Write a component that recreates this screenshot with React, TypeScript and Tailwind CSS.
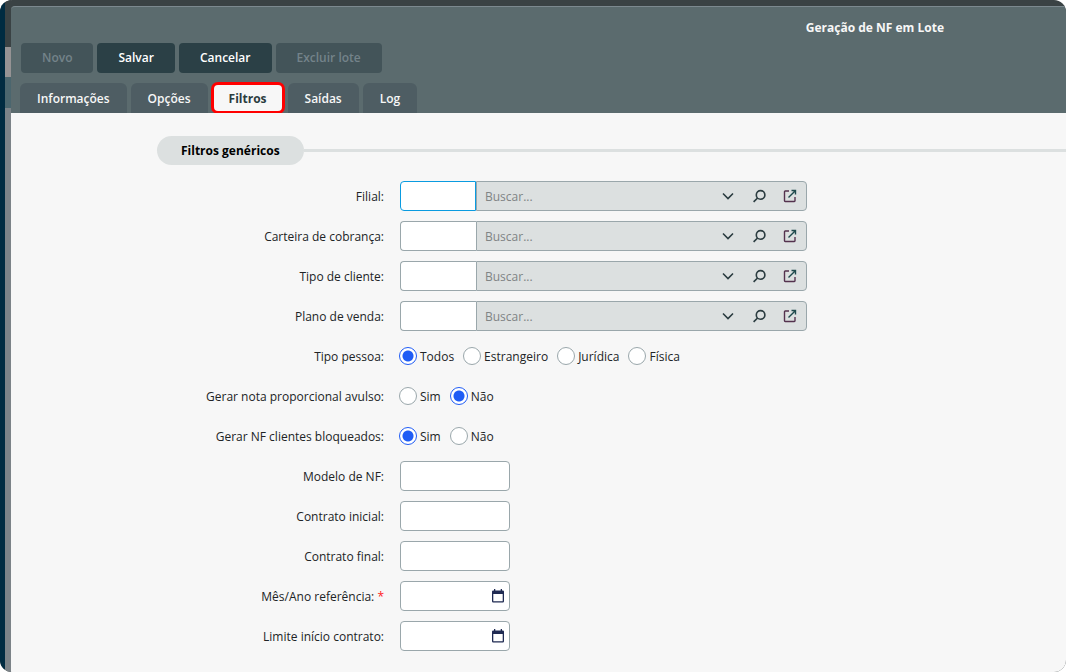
import { useState } from "react";
import type { ReactNode } from "react";

type TabKey = "informacoes" | "opcoes" | "filtros" | "saidas" | "log";

const actions: { label: string; disabled?: boolean }[] = [
  { label: "Novo", disabled: true },
  { label: "Salvar" },
  { label: "Cancelar" },
  { label: "Excluir lote", disabled: true },
];

const tabs: { key: TabKey; label: string }[] = [
  { key: "informacoes", label: "Informações" },
  { key: "opcoes", label: "Opções" },
  { key: "filtros", label: "Filtros" },
  { key: "saidas", label: "Saídas" },
  { key: "log", label: "Log" },
];

export default function App() {
  const [activeTab, setActiveTab] = useState<TabKey>("filtros");

  return (
    <div className="bg-white font-['Open_Sans',sans-serif] text-xs leading-[18px] text-[#212426]">
      <div className="flex min-h-screen overflow-hidden rounded-xl bg-[#3a4244]">
        <Backdrop />
        <div className="flex min-w-0 flex-1 flex-col pt-1.5">
          {/* Window header */}
          <header className="rounded-tl border-t border-[#7c898f] bg-[#5b6b6e] pt-3 pl-2.5">
            <h1 className="pr-[122px] text-right font-bold text-[#f7f7f7]">
              Geração de NF em Lote
            </h1>
            <div className="mt-1.5 flex gap-1">
              {actions.map((action) => (
                <button
                  key={action.label}
                  type="button"
                  disabled={action.disabled}
                  className="h-[30px] rounded bg-[#2b4046] px-[21px] leading-4 font-semibold whitespace-nowrap text-white disabled:bg-[#435459] disabled:text-[#74838a]"
                >
                  {action.label}
                </button>
              ))}
            </div>
            <div className="mt-2.5 -ml-px flex gap-1" role="tablist">
              {tabs.map((tab) => (
                <button
                  key={tab.key}
                  type="button"
                  role="tab"
                  aria-selected={activeTab === tab.key}
                  onClick={() => setActiveTab(tab.key)}
                  className={`h-[30px] px-[17px] pt-px whitespace-nowrap ${
                    activeTab === tab.key
                      ? "rounded-md bg-[#f7f7f7] font-bold text-[#2b3c40] outline-3 -outline-offset-2 outline-[#ff0000]"
                      : "rounded-t-md bg-[#4e5d63] font-semibold text-[#f7f7f7]"
                  }`}
                >
                  {tab.label}
                </button>
              ))}
            </div>
          </header>

          {/* Form */}
          <main className="flex-1 bg-[#f7f7f7] pt-[23px] pb-5">
            <div className="flex items-center pl-[146px]">
              <h2 className="rounded-full bg-[#dce0e0] px-6 py-1.5 leading-[17px] font-bold text-black">
                Filtros genéricos
              </h2>
              <div className="h-[3px] flex-1 bg-[#dce0e0]" />
            </div>
            <form className="mt-4 flex flex-col gap-2.5">
              <Row label="Filial:" htmlFor="filial">
                <SearchField id="filial" active />
              </Row>
              <Row label="Carteira de cobrança:" htmlFor="carteira">
                <SearchField id="carteira" />
              </Row>
              <Row label="Tipo de cliente:" htmlFor="tipo-cliente">
                <SearchField id="tipo-cliente" />
              </Row>
              <Row label="Plano de venda:" htmlFor="plano">
                <SearchField id="plano" />
              </Row>
              <Row label="Tipo pessoa:">
                <RadioGroup
                  name="Tipo pessoa"
                  options={["Todos", "Estrangeiro", "Jurídica", "Física"]}
                  initial="Todos"
                />
              </Row>
              <Row label="Gerar nota proporcional avulso:">
                <RadioGroup
                  name="Gerar nota proporcional avulso"
                  options={["Sim", "Não"]}
                  initial="Não"
                />
              </Row>
              <Row label="Gerar NF clientes bloqueados:">
                <RadioGroup
                  name="Gerar NF clientes bloqueados"
                  options={["Sim", "Não"]}
                  initial="Sim"
                />
              </Row>
              <Row label="Modelo de NF:" htmlFor="modelo">
                <TextField id="modelo" />
              </Row>
              <Row label="Contrato inicial:" htmlFor="contrato-inicial">
                <TextField id="contrato-inicial" />
              </Row>
              <Row label="Contrato final:" htmlFor="contrato-final">
                <TextField id="contrato-final" />
              </Row>
              <Row label="Mês/Ano referência:" htmlFor="referencia" required>
                <DateField id="referencia" />
              </Row>
              <Row label="Limite início contrato:" htmlFor="limite">
                <DateField id="limite" />
              </Row>
            </form>
          </main>
        </div>
      </div>
    </div>
  );
}

/** Sliver of the dimmed page that shows to the left of the window */
function Backdrop() {
  return (
    <div className="flex w-[11px] shrink-0">
      <div className="w-[5px] bg-[#002b41]" />
      <div className="flex flex-1 flex-col">
        <div className="h-[47px] bg-[#3a4244]" />
        <div className="h-[30px] bg-[#969394]" />
        <div className="h-[31px] bg-[#4b666e]" />
        <div className="flex-1 bg-[#7c8388]" />
      </div>
    </div>
  );
}

interface RowProps {
  label: string;
  htmlFor?: string;
  required?: boolean;
  children: ReactNode;
}

function Row({ label, htmlFor, required, children }: RowProps) {
  const text = (
    <>
      {label}
      {required && <span className="text-[#ff1a1a]"> *</span>}
    </>
  );
  return (
    <div className="grid min-h-[30px] grid-cols-[373px_1fr] items-center gap-x-4">
      {htmlFor ? (
        <label htmlFor={htmlFor} className="pt-px text-right">
          {text}
        </label>
      ) : (
        <span className="pt-px text-right">{text}</span>
      )}
      {children}
    </div>
  );
}

/** Code box joined to a description box with lookup buttons */
function SearchField({ id, active }: { id: string; active?: boolean }) {
  return (
    <div className="flex h-[30px] w-full max-w-[407px]">
      <input
        id={id}
        type="text"
        className={`w-[76px] rounded-l border bg-white px-2 outline-none ${
          active ? "border-[#0a9be0]" : "border-r-0 border-[#9aa7ab]"
        }`}
      />
      <div className="flex min-w-0 flex-1 rounded-r border border-[#9aa7ab] bg-[#dce0e0] text-[#2b3c40]">
        <input
          type="text"
          aria-label="Buscar"
          placeholder="Buscar..."
          className="min-w-0 flex-1 bg-transparent pt-px pl-2 outline-none placeholder:text-[#808485]"
        />
        <button type="button" aria-label="Abrir lista" className="flex w-8 items-center justify-center">
          <svg width="12" height="8" viewBox="0 0 12 8" fill="none" stroke="currentColor" strokeWidth="1.6">
            <path d="M1 1.5l5 5 5-5" />
          </svg>
        </button>
        <button type="button" aria-label="Pesquisar" className="flex w-[30px] items-center justify-center">
          <svg width="14" height="14" viewBox="0 0 14 14" fill="none" stroke="currentColor" strokeWidth="1.6">
            <circle cx="8.6" cy="5.9" r="4.3" />
            <path d="M5.6 9l-4 3.9" />
          </svg>
        </button>
        <button type="button" aria-label="Abrir cadastro" className="flex w-8 items-center justify-center">
          <svg width="14" height="14" viewBox="0 0 14 14" fill="none" strokeWidth="1.4">
            <path d="M6 2H2.2Q1.5 2 1.5 2.7v9.1q0 .7.7.7h9.1q.7 0 .7-.7V8" stroke="#54324e" />
            <path d="M8.5 1.5h4v4M12.3 1.7L5.5 8.5" stroke="#1f4a4d" />
          </svg>
        </button>
      </div>
    </div>
  );
}

interface RadioGroupProps {
  name: string;
  options: string[];
  initial: string;
}

function RadioGroup({ name, options, initial }: RadioGroupProps) {
  return (
    <div role="radiogroup" aria-label={name} className="-ml-px flex flex-wrap gap-x-[9px]">
      {options.map((option) => (
        <label key={option} className="flex items-center gap-[3px]">
          <input
            type="radio"
            name={name}
            defaultChecked={option === initial}
            className="size-[18px] appearance-none rounded-full border border-[#9aa7ab] bg-white checked:border-[#1f5cf5] checked:bg-[radial-gradient(circle,#1f5cf5_5px,#fff_6px)]"
          />
          <span className="pt-px">{option}</span>
        </label>
      ))}
    </div>
  );
}

function TextField({ id }: { id: string }) {
  return (
    <input
      id={id}
      type="text"
      className="h-[30px] w-[110px] rounded border border-[#9aa7ab] bg-white px-2"
    />
  );
}

function DateField({ id }: { id: string }) {
  return (
    <div className="flex h-[30px] w-[110px] rounded border border-[#9aa7ab] bg-white">
      <input id={id} type="text" className="min-w-0 flex-1 pl-2 outline-none" />
      <button type="button" aria-label="Abrir calendário" className="flex w-[22px] items-center justify-center text-[#1f2a52]">
        <svg width="14" height="16" viewBox="0 0 14 16" fill="currentColor">
          <path
            fillRule="evenodd"
            d="M3 1h1.3v1.4h5.4V1H11v1.4h.8q1.2 0 1.2 1.2v9.7q0 1.2-1.2 1.2H2.2Q1 14.5 1 13.3V3.6q0-1.2 1.2-1.2H3zM2.3 6v7.2h9.4V6z"
          />
        </svg>
      </button>
    </div>
  );
}
